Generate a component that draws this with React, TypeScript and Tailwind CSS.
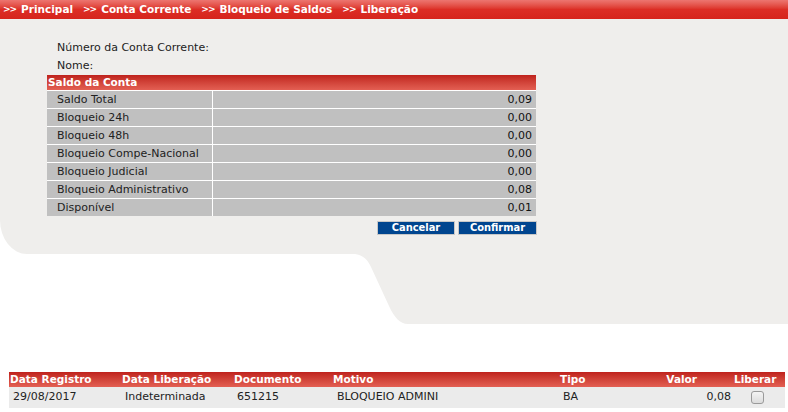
const saldos = [
  { label: 'Saldo Total', valor: '0,09' },
  { label: 'Bloqueio 24h', valor: '0,00' },
  { label: 'Bloqueio 48h', valor: '0,00' },
  { label: 'Bloqueio Compe-Nacional', valor: '0,00' },
  { label: 'Bloqueio Judicial', valor: '0,00' },
  { label: 'Bloqueio Administrativo', valor: '0,08' },
  { label: 'Disponível', valor: '0,01' },
];

const breadcrumb = ['Principal', 'Conta Corrente', 'Bloqueio de Saldos', 'Liberação'];

const cols = 'grid grid-cols-[112px_112px_99px_227px_81px_95px_50px]';

export default function App() {
  return (
    <div className="w-[788px] h-[412px] overflow-hidden bg-white font-['DejaVu_Sans',Verdana,sans-serif] text-[11px] text-[#222]">
      {/* breadcrumb */}
      <div className="h-[19px] flex items-center gap-[10px] pl-[3px] bg-gradient-to-b from-[#ec7570] via-[#dc2d25] to-[#d6241c] text-white font-bold text-[10.5px]">
        {breadcrumb.map((item) => (
          <span key={item} className="flex items-center gap-[5px]">
            <span className="text-[9px] tracking-[-1px]">&gt;&gt;</span>
            <span>{item}</span>
          </span>
        ))}
      </div>

      {/* painel */}
      <div className="bg-[#efeeec] rounded-bl-[27px_34px] h-[235px] pt-[19px] pl-[47px]">
        <div className="pl-[10px] h-[19px] leading-[19px]">Número da Conta Corrente:</div>
        <div className="pl-[10px] h-[18px] leading-[18px]">Nome:</div>

        <div className="w-[489px] flex flex-col gap-px bg-white">
          <div className="h-[15px] leading-[15px] bg-gradient-to-b from-[#bf211c] to-[#e35f53] text-white font-bold text-[10.5px] pl-px">
            Saldo da Conta
          </div>
          {saldos.map((s) => (
            <div key={s.label} className="flex gap-px h-[17px] leading-[18px]">
              <div className="w-[165px] bg-[#c0c0c0] pl-[10px]">{s.label}</div>
              <div className="flex-1 bg-[#c0c0c0] text-right pr-[4px] text-[#111]">{s.valor}</div>
            </div>
          ))}
        </div>

        <div className="w-[490px] flex justify-end gap-[3px] mt-[5px]">
          <button className="w-[78px] h-[14px] border border-[#c8c8c8] bg-[#00458f] text-white font-bold font-['DejaVu_Sans_Condensed','DejaVu_Sans',sans-serif] [font-stretch:condensed] text-[11px] leading-[12px]">
            Cancelar
          </button>
          <button className="w-[79px] h-[14px] border border-[#c8c8c8] bg-[#00458f] text-white font-bold font-['DejaVu_Sans_Condensed','DejaVu_Sans',sans-serif] [font-stretch:condensed] text-[11px] leading-[12px]">
            Confirmar
          </button>
        </div>
      </div>

      {/* cauda decorativa */}
      <svg width="788" height="70" viewBox="0 0 788 70" className="block">
        <path
          d="M355 0 C363 1 368 6 371 13 L389 52 C394 63 400 70 408 70 L788 70 L788 0 Z"
          fill="#efeeec"
        />
      </svg>

      {/* bloqueios */}
      <div className="mt-[48px] ml-[9px] w-[776px]">
        <div className={`${cols} h-[15px] leading-[15px] bg-gradient-to-b from-[#bf211c] to-[#e35f53] text-white font-bold text-[10.5px]`}>
          <div className="pl-px">Data Registro</div>
          <div className="pl-px">Data Liberação</div>
          <div className="pl-px">Documento</div>
          <div className="pl-px">Motivo</div>
          <div className="pl-px">Tipo</div>
          <div className="text-right pr-[38px]">Valor</div>
          <div className="-ml-px">Liberar</div>
        </div>
        <div className={`${cols} h-[21px] items-center bg-[#ebebeb]`}>
          <div className="pl-[4px]">29/08/2017</div>
          <div className="pl-[4px]">Indeterminada</div>
          <div className="pl-[4px]">651215</div>
          <div className="pl-[5px]">BLOQUEIO ADMINI</div>
          <div className="pl-[4px]">BA</div>
          <div className="text-right pr-[4px]">0,08</div>
          <div className="flex pl-[16px]">
            <span className="w-[13px] h-[13px] rounded-[3px] border border-[#9a9a9a] bg-gradient-to-b from-[#f4f4f4] to-[#dcdcdc]" />
          </div>
        </div>
      </div>
    </div>
  );
}
